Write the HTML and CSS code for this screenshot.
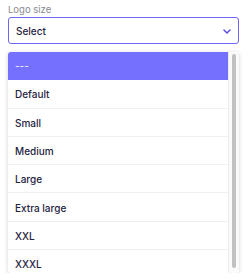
FILE: index.html
```html
<!DOCTYPE html>
<html lang="en">
<head>
  <meta charset="UTF-8" />
  <title>Logo size</title>
  <link rel="stylesheet" href="styles.css">
</head>
<body>
  <div class="field">
    <label class="field-label">Logo size</label>
    <div class="select">
      <span>Select</span>
      <svg class="chevron" width="8" height="5" viewBox="0 0 8 5"><path d="M1 1l3 3 3-3" fill="none" stroke="#5b50e0" stroke-width="1.5" stroke-linecap="round" stroke-linejoin="round"/></svg>
    </div>
    <div class="menu">
      <ul class="options">
        <li class="active">---</li>
        <li>Default</li>
        <li>Small</li>
        <li>Medium</li>
        <li>Large</li>
        <li>Extra large</li>
        <li>XXL</li>
        <li>XXXL</li>
      </ul>
      <div class="track"><div class="thumb"></div></div>
    </div>
  </div>
</body>
</html>
```
FILE: styles.css
```css
body { margin: 0; padding: 3px 11px 0 8px; font-family: Inter, "Noto Sans", sans-serif; background: #fff; color: #25233f; }
.field { display: flex; flex-direction: column; }
.field-label { font-size: 9.5px; color: #8a8a92; line-height: 13px; height: 14px; }
.select { display: flex; align-items: center; justify-content: space-between; height: 27px; box-sizing: border-box; border: 1.5px solid #6e66f5; border-radius: 3px; padding: 1px 7px 0 7px; font-size: 10px; font-weight: 500; }
.chevron { display: block; }
.menu { display: flex; margin-top: 8px; height: 221px; overflow: hidden; border-radius: 3px; box-shadow: 0 1px 4px rgba(0,0,0,0.18); }
.options { list-style: none; margin: 0; padding: 0; flex: 1; }
.options li { height: 28.3px; box-sizing: border-box; padding: 1px 0 0 7px; display: flex; align-items: center; font-size: 10px; font-weight: 500; border-bottom: 1px solid #f0f0f2; }
.options li.active { background: #7670ff; color: #e8e6ff; border-bottom-color: #7670ff; }
.track { width: 11px; background: #fafafa; border-left: 1px solid #ececec; box-sizing: border-box; padding: 2px 3px; }
.thumb { height: 214px; background: #c1c1c1; border-radius: 3px; }
```
